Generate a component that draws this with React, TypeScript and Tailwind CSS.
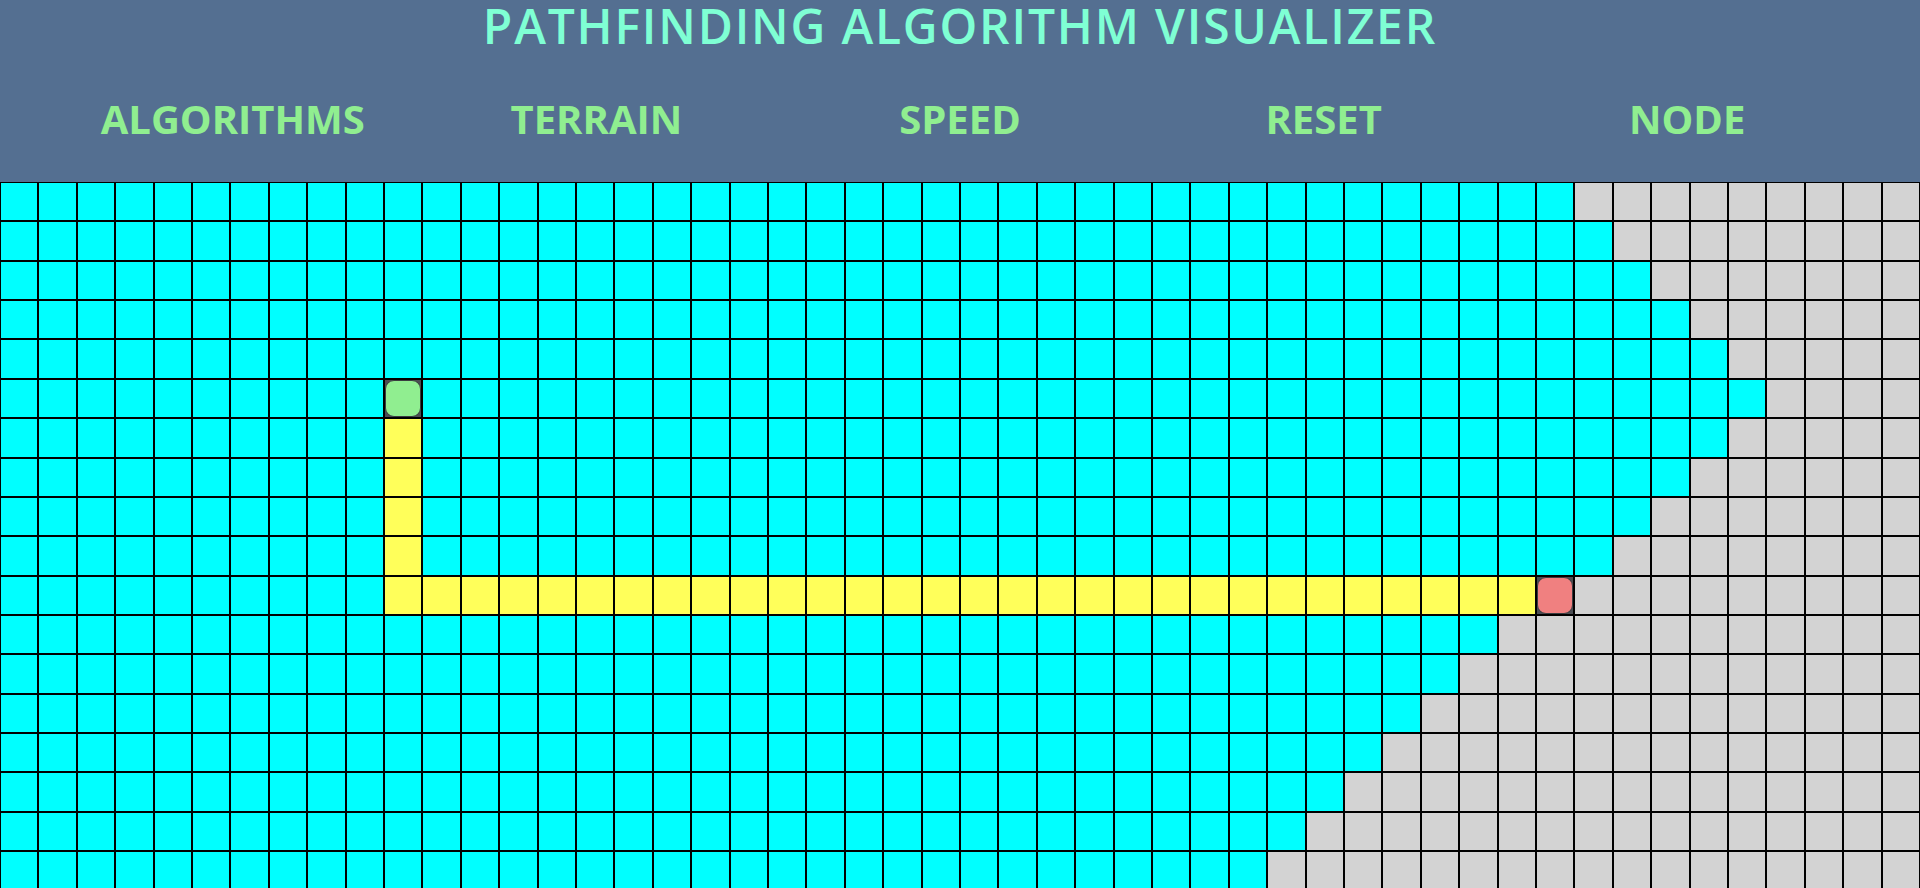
import React from "react";

const COLS = 50;
const ROWS = 18;
const START = { r: 5, c: 10 };
const END = { r: 10, c: 40 };

function cellType(r: number, c: number): string {
  if (r === START.r && c === START.c) return "start";
  if (r === END.r && c === END.c) return "end";
  if (c === 10 && r >= 6 && r <= 10) return "path";
  if (r === 10 && c >= 11 && c <= 39) return "path";
  const d = Math.abs(c - START.c) + Math.abs(r - START.r);
  if (r <= 10 ? d <= 35 : d <= 34) return "visited";
  return "empty";
}

function Cell({ type }: { type: string }) {
  if (type === "start" || type === "end") {
    return (
      <div className="h-[39.36px] border border-black bg-[#4b4e53] p-0">
        <div
          className={
            "h-full w-full rounded-[9px] border border-[#3a3d40] " +
            (type === "start" ? "bg-[#90ee90]" : "bg-[#f08080]")
          }
        />
      </div>
    );
  }
  const bg =
    type === "visited"
      ? "bg-[#00ffff]"
      : type === "path"
      ? "bg-[#ffff5a]"
      : "bg-[#d3d3d3]";
  return <div className={"h-[39.36px] border border-black " + bg} />;
}

export default function App() {
  const menu = ["ALGORITHMS", "TERRAIN", "SPEED", "RESET", "NODE"];
  const cells: React.ReactNode[] = [];
  for (let r = 0; r < ROWS; r++) {
    for (let c = 0; c < COLS; c++) {
      cells.push(<Cell key={r + "-" + c} type={cellType(r, c)} />);
    }
  }
  return (
    <div
      className="h-screen w-full overflow-hidden bg-[#546f91]"
      style={{ fontFamily: '"Open Sans", "Noto Sans", sans-serif' }}
    >
      <header className="h-[182px] flex flex-col">
        <h1 className="text-center text-[48px] leading-[52px] font-semibold tracking-[1.8px] text-[#7fffd4]">
          PATHFINDING ALGORITHM VISUALIZER
        </h1>
        <nav className="mx-[51px] mt-[47px] grid grid-cols-5">
          {menu.map((m) => (
            <div
              key={m}
              className="text-center text-[40px] leading-none font-bold text-[#90ee90]"
            >
              {m}
            </div>
          ))}
        </nav>
      </header>
      <div className="grid grid-cols-[repeat(50,minmax(0,1fr))]">{cells}</div>
    </div>
  );
}
